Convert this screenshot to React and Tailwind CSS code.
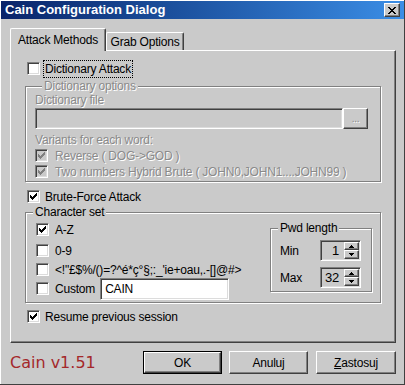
import React from "react";

const raised =
  "border border-t-white border-l-white border-r-[#404040] border-b-[#404040] shadow-[inset_-1px_-1px_0_#808080]";
const sunken =
  "border border-t-[#808080] border-l-[#808080] border-r-white border-b-white shadow-[inset_1px_1px_0_#404040,inset_-1px_-1px_0_#dcdcdc]";
const etched =
  "border border-[#808080] shadow-[inset_1px_1px_0_#fff,1px_1px_0_#fff]";
const grayText = "text-[#8a8a8a] [text-shadow:1px_1px_0_#fff]";

function CheckMark({ color }) {
  return (
    <svg width="7" height="7" viewBox="0 0 7 7" shapeRendering="crispEdges">
      <path
        d="M0 2h1v1h1v1h1v-1h1v-1h1v-1h1v-1h1v3h-1v1h-1v1h-1v1h-1v1h-1v-1h-1v-1h-1z"
        fill={color}
      />
    </svg>
  );
}

function Check({ checked, disabled }) {
  return (
    <span
      className={`w-[13px] h-[13px] shrink-0 flex items-center justify-center ${sunken} ${
        disabled ? "bg-[#cacaca]" : "bg-white"
      }`}
    >
      {checked && <CheckMark color={disabled ? "#808080" : "#000"} />}
    </span>
  );
}

function Arrow({ down }) {
  return (
    <svg width="5" height="3" viewBox="0 0 5 3" shapeRendering="crispEdges">
      <path d={down ? "M0 0h5l-2.5 3z" : "M2.5 0l2.5 3h-5z"} fill="#000" />
    </svg>
  );
}

function Spin({ value }) {
  return (
    <div className={`w-[41px] h-[21px] flex items-center bg-[#cacaca] ${sunken} pl-[2px] pr-[1px]`}>
      <span className="flex-1 text-right pr-[5px] text-[13px] leading-[13px]">{value}</span>
      <div className="flex flex-col w-[15px]">
        <div className={`h-[8px] flex items-center justify-center ${raised}`}>
          <Arrow />
        </div>
        <div className={`h-[9px] flex items-center justify-center ${raised}`}>
          <Arrow down />
        </div>
      </div>
    </div>
  );
}

function Button({ children, w, isDefault }) {
  const inner = (
    <div className={`h-full flex items-center justify-center bg-[#cacaca] ${raised}`}>{children}</div>
  );
  if (isDefault) {
    return <div className={`${w} h-[23px] border border-black`}>{inner}</div>;
  }
  return <div className={`${w} h-[23px]`}>{inner}</div>;
}

export default function App() {
  return (
    <div className="w-[405px] h-[385px] bg-[#cacaca] p-[1px] flex flex-col overflow-hidden font-['Liberation_Sans',Arial,sans-serif] text-[12px] leading-[12px] tracking-[-0.2px] text-black shadow-[inset_-1px_-1px_0_#404040,inset_1px_1px_0_#fff]">
      {/* title bar */}
      <div className="h-[18px] shrink-0 flex items-center justify-between pl-[4px] pr-[4px] bg-linear-to-r from-[#0a246a] to-[#3b8ee6]">
        <span className="text-white font-bold text-[13px] tracking-normal">Cain Configuration Dialog</span>
        <div className={`w-[16px] h-[14px] flex items-center justify-center bg-[#cacaca] ${raised}`}>
          <svg width="8" height="7" viewBox="0 0 8 7" shapeRendering="crispEdges">
            <path
              d="M0 0h2v1h1v1h2v-1h1v-1h2v1h-1v1h-1v1h-1v1h1v1h1v1h1v1h-2v-1h-1v-1h-2v1h-1v1h-2v-1h1v-1h1v-1h1v-1h-1v-1h-1v-1h-1z"
              fill="#000"
            />
          </svg>
        </div>
      </div>

      <div className="ml-[9px] mr-[8px] mt-[9px] flex flex-col">
        {/* tabs */}
        <div className="flex items-end h-[22px]">
          <div className="relative z-10 -mb-px h-[23px] w-[96px] flex items-center justify-center bg-[#cacaca] border-t border-l border-r border-t-white border-l-white border-r-[#404040] rounded-t-[2px] shadow-[inset_-1px_0_0_#808080]">
            Attack Methods
          </div>
          <div className="h-[18px] w-[78px] flex items-center justify-center border-t border-l border-r border-t-white border-l-white border-r-[#404040] rounded-t-[2px] shadow-[inset_-1px_0_0_#808080]">
            Grab Options
          </div>
        </div>

        {/* tab panel */}
        <div className={`h-[293px] flex flex-col px-[14px] ${raised}`}>
          <div className="mt-[11px] h-[13px] pl-[2px] flex items-center gap-[3px]">
            <Check />
            <span className="h-[18px] flex items-center px-[1px] border border-dotted border-black">
              Dictionary Attack
            </span>
          </div>

          <fieldset className={`mt-[5px] pl-[9px] pb-[3px] ${etched}`}>
            <legend className={`ml-[7px] px-[2px] bg-[#cacaca] ${grayText}`}>Dictionary options</legend>
            <div className={`mt-[2px] ${grayText}`}>Dictionary file</div>
            <div className="mt-[2px] flex">
              <div className={`w-[308px] h-[21px] bg-[#cacaca] ${sunken}`} />
              <div className={`w-[25px] h-[21px] flex items-center justify-center bg-[#cacaca] text-[10px] ${raised} ${grayText}`}>
                ...
              </div>
            </div>
            <div className={`mt-[5px] ${grayText}`}>Variants for each word:</div>
            <div className="mt-[3px] h-[13px] flex items-center gap-[7px]">
              <Check checked disabled />
              <span className={grayText}>Reverse ( DOG-&gt;GOD )</span>
            </div>
            <div className="mt-[3px] h-[13px] flex items-center gap-[7px]">
              <Check checked disabled />
              <span className={grayText}>Two numbers Hybrid Brute ( JOHN0,JOHN1....JOHN99 )</span>
            </div>
          </fieldset>

          <div className="mt-[8px] h-[13px] pl-[2px] flex items-center gap-[5px]">
            <Check checked />
            <span>Brute-Force Attack</span>
          </div>

          <fieldset className={`mt-[3px] ${etched}`}>
            <legend className="ml-[7px] px-[2px] bg-[#cacaca]">Character set</legend>
            <div className="flex">
              <div className="flex flex-col pl-[10px] pb-[7px]">
                <div className="mt-[5px] h-[13px] flex items-center gap-[6px]">
                  <Check checked />
                  <span>A-Z</span>
                </div>
                <div className="mt-[8px] h-[13px] flex items-center gap-[6px]">
                  <Check />
                  <span>0-9</span>
                </div>
                <div className="mt-[6px] h-[13px] flex items-center gap-[6px]">
                  <Check />
                  <span className="whitespace-nowrap">{`<!"£$%/()=?^é*ç°§;:_'ie+oau,.-[]@#>`}</span>
                </div>
                <div className="mt-[6px] h-[13px] flex items-center gap-[6px]">
                  <Check />
                  <span>Custom</span>
                  <div className={`ml-[-1px] w-[129px] h-[22px] shrink-0 flex items-center pl-[4px] bg-white ${sunken}`}>
                    CAIN
                  </div>
                </div>
              </div>

              <fieldset className={`ml-auto mr-[8px] mt-[4px] self-start w-[102px] pl-[9px] pb-[3px] ${etched}`}>
                <legend className="ml-[-2px] px-[2px] bg-[#cacaca]">Pwd length</legend>
                <div className="mt-[6px] flex items-center">
                  <span className="w-[40px]">Min</span>
                  <Spin value="1" />
                </div>
                <div className="mt-[6px] flex items-center">
                  <span className="w-[40px]">Max</span>
                  <Spin value="32" />
                </div>
              </fieldset>
            </div>
          </fieldset>

          <div className="mt-[7px] h-[13px] pl-[2px] flex items-center gap-[5px]">
            <Check checked />
            <span>Resume previous session</span>
          </div>
        </div>

        {/* bottom row */}
        <div className="mt-[8px] h-[23px] flex items-center">
          <span className="font-['DejaVu_Sans',Verdana,sans-serif] text-[16px] leading-[16px] tracking-normal text-[#a4282a]">
            Cain v1.51
          </span>
          <div className="ml-auto flex">
            <Button w="w-[79px]" isDefault>OK</Button>
            <div className="w-[7px]" />
            <Button w="w-[79px]">Anuluj</Button>
            <div className="w-[8px]" />
            <Button w="w-[80px]">
              <span>
                <span className="underline">Z</span>astosuj
              </span>
            </Button>
          </div>
        </div>
      </div>
    </div>
  );
}
